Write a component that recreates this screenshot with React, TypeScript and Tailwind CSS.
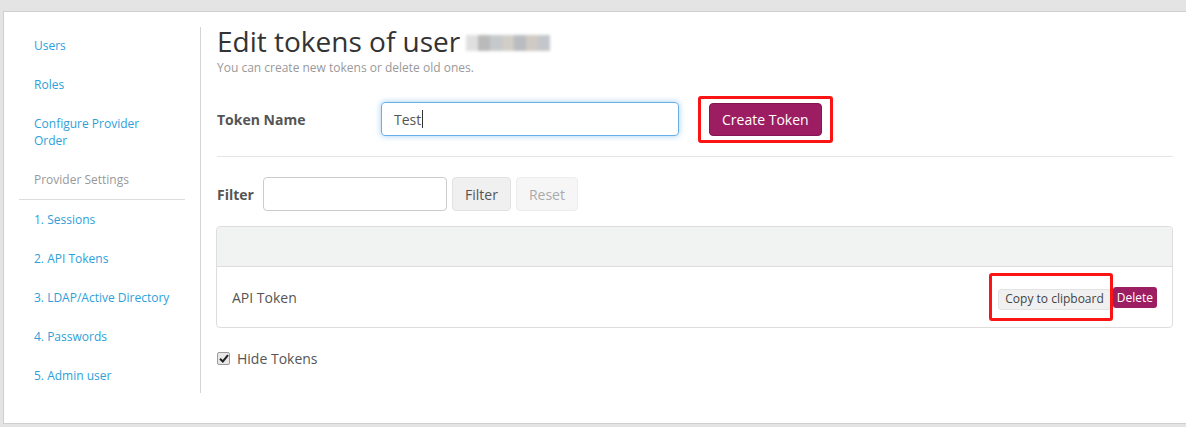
import { useState } from "react";

const sideLinks = [
  { label: "Users" },
  { label: "Roles" },
  { label: "Configure Provider Order", wrap: true },
  { label: "Provider Settings", muted: true },
];

const providerLinks = [
  "1. Sessions",
  "2. API Tokens",
  "3. LDAP/Active Directory",
  "4. Passwords",
  "5. Admin user",
];

function Sidebar() {
  return (
    <aside className="w-[166px] ml-[15px] mr-[15px] pt-[14px] shrink-0">
      {sideLinks.map((l) => (
        <div
          key={l.label}
          className={
            "px-[15px] py-[11px] text-[12px] leading-[17px] " +
            (l.muted ? "text-[#999]" : "text-[#2d9fda]")
          }
        >
          {l.wrap ? (
            <>
              Configure Provider
              <br />
              Order
            </>
          ) : (
            l.label
          )}
        </div>
      ))}
      <div className="border-t border-[#ddd]" />
      {providerLinks.map((l) => (
        <div
          key={l}
          className="px-[15px] py-[11px] text-[12px] leading-[17px] text-[#2d9fda]"
        >
          {l}
        </div>
      ))}
    </aside>
  );
}

function Highlight({ className }: { className: string }) {
  // red annotation box drawn over the screenshot
  return (
    <div
      className={
        "absolute border-[3px] border-[#fb1414] rounded-[3px] pointer-events-none " +
        className
      }
    />
  );
}

export default function App() {
  const [hide, setHide] = useState(true);

  return (
    <div
      className="h-[427px] bg-[#e4e4e4] pt-[11px] pl-[3px] overflow-hidden"
      style={{ fontFamily: '"Open Sans", "Liberation Sans", sans-serif' }}
    >
      <div className="h-[413px] bg-white border-l border-t border-b border-[#cfcfcf] flex">
        <Sidebar />

        {/* main */}
        <main className="mt-[15px] h-[366px] border-l border-[#d4d4d4] pl-[16px] pr-[14px] flex-1 min-w-0">
          <div className="w-[956px]">
            <h1 className="-mt-[2px] text-[28px] leading-[32px] text-[#333] font-normal flex items-center">
              Edit tokens of user
              <span className="ml-[6px] mt-[4px] flex blur-[1.5px] opacity-80">
                <span className="w-[12px] h-[16px] bg-[#d8d8d8]" />
                <span className="w-[12px] h-[16px] bg-[#a9a9a9]" />
                <span className="w-[12px] h-[16px] bg-[#b9bcbf]" />
                <span className="w-[12px] h-[16px] bg-[#c6c1ba]" />
                <span className="w-[12px] h-[16px] bg-[#a8acb1]" />
                <span className="w-[12px] h-[16px] bg-[#c4bdb6]" />
                <span className="w-[12px] h-[16px] bg-[#b5b9bd]" />
              </span>
            </h1>
            <p className="mt-[3px] text-[12px] leading-[16px] text-[#999]">
              You can create new tokens or delete old ones.
            </p>

            {/* token name row */}
            <div className="mt-[26px] flex items-center">
              <label className="w-[164px] text-[14px] font-bold text-[#555]">
                Token Name
              </label>
              <div className="w-[298px] h-[34px] rounded-[4px] border border-[#66afe9] shadow-[0_0_6px_rgba(102,175,233,0.6)] px-[12px] flex items-center text-[14px] text-[#555]">
                Test
                <span className="ml-[1px] w-[1px] h-[18px] bg-[#333]" />
              </div>
              <div className="relative ml-[30px]">
                <button className="h-[33px] px-[12px] rounded-[4px] bg-[#9c1d61] border border-[#861651] text-white text-[14px]">
                  Create Token
                </button>
                <Highlight className="-left-[11px] -right-[11px] -top-[7px] -bottom-[7px]" />
              </div>
            </div>

            <div className="mt-[20px] border-t border-[#e5e5e5]" />

            {/* filter row */}
            <div className="mt-[20px] flex items-center">
              <span className="text-[14px] font-bold text-[#555] mr-[9px]">
                Filter
              </span>
              <input className="w-[184px] h-[34px] rounded-[4px] border border-[#ccc] px-[12px] text-[14px] outline-none" />
              <button className="ml-[5px] w-[59px] h-[34px] rounded-[4px] bg-[#f0f0f0] border border-[#e2e2e2] text-[14px] text-[#555]">
                Filter
              </button>
              <button className="ml-[5px] w-[62px] h-[34px] rounded-[4px] bg-[#f6f6f6] border border-[#ececec] text-[14px] text-[#aaa]">
                Reset
              </button>
            </div>

            {/* token table */}
            <div className="mt-[15px] -ml-[1px] border border-[#ddd] rounded-[4px]">
              <div className="h-[40px] bg-[#f1f2f2] border-b border-[#ddd] rounded-t-[4px]" />
              <div className="h-[60px] pl-[15px] pr-[15px] flex items-center justify-between">
                <span className="text-[14px] text-[#555]">API Token</span>
                <div className="flex items-center pt-[1px]">
                  <div className="relative">
                    <button className="h-[21px] px-[6px] rounded-[3px] bg-[#f0f0f0] border border-[#e3e3e3] text-[12px] text-[#444] leading-none">
                      Copy to clipboard
                    </button>
                    <Highlight className="-left-[9px] -right-[2px] -top-[12px] -bottom-[11px]" />
                  </div>
                  <button className="ml-[2px] h-[21px] px-[4px] rounded-[3px] bg-[#9c1d61] text-white text-[12px] leading-none">
                    Delete
                  </button>
                </div>
              </div>
            </div>

            {/* hide tokens */}
            <label
              className="mt-[20px] flex items-center cursor-pointer select-none"
              onClick={() => setHide(!hide)}
            >
              <span className="w-[13px] h-[13px] rounded-[2px] border border-[#9a9a9a] bg-[#e8e8e8] flex items-center justify-center">
                {hide && (
                  <svg width="10" height="9" viewBox="0 0 10 9">
                    <path
                      d="M1 4.8 L3.8 7.5 L9 1.2"
                      fill="none"
                      stroke="#222"
                      strokeWidth="2"
                    />
                  </svg>
                )}
              </span>
              <span className="ml-[7px] text-[14px] text-[#555]">
                Hide Tokens
              </span>
            </label>
          </div>
        </main>
      </div>
    </div>
  );
}
